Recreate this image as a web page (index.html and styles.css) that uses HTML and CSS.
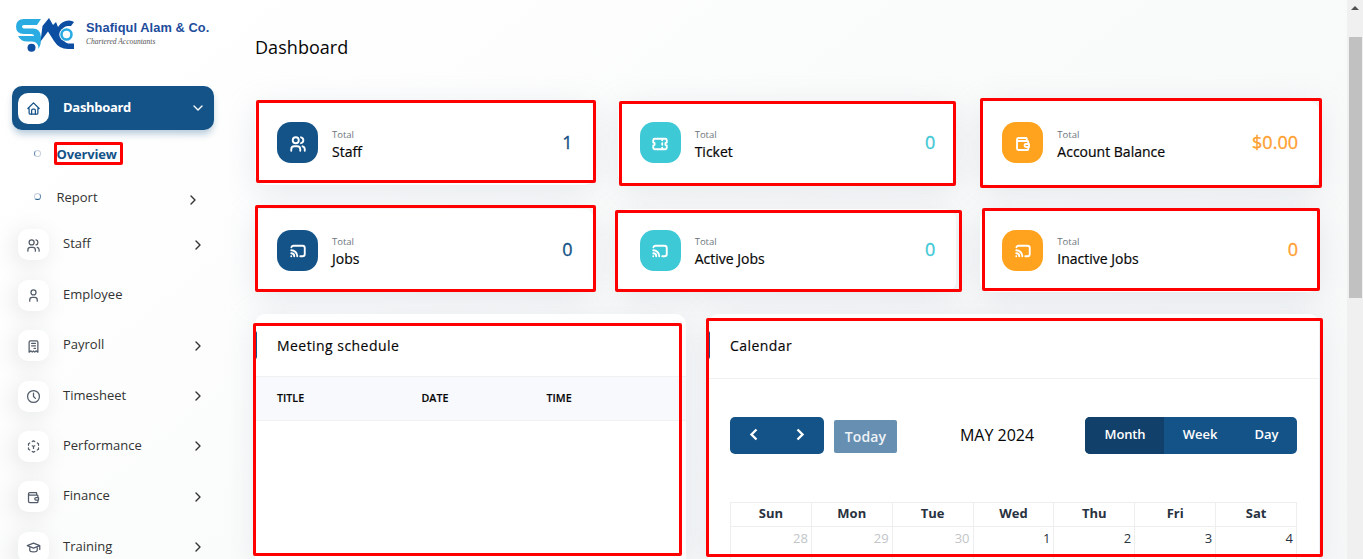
FILE: index.html
```
<!DOCTYPE html>
<html lang="en">
<head>
<meta charset="utf-8">
<title>Dashboard</title>
<link rel="stylesheet" href="styles.css">
</head>
<body>
<svg class="defs" width="0" height="0">
  <symbol id="home" viewBox="0 0 24 24"><path d="M5 12H3l9-9 9 9h-2v7a2 2 0 0 1-2 2H7a2 2 0 0 1-2-2z"/><path d="M9 21v-6a2 2 0 0 1 2-2h2a2 2 0 0 1 2 2v6"/></symbol>
  <symbol id="users" viewBox="0 0 24 24"><circle cx="9" cy="7" r="4"/><path d="M3 21v-2a4 4 0 0 1 4-4h4a4 4 0 0 1 4 4v2M16 3.100a4 4 0 0 1 0 7.800M21 21v-2a4 4 0 0 0-3-3.900"/></symbol>
  <symbol id="user" viewBox="0 0 24 24"><circle cx="12" cy="7" r="4"/><path d="M6 21v-2a4 4 0 0 1 4-4h4a4 4 0 0 1 4 4v2"/></symbol>
  <symbol id="receipt" viewBox="0 0 24 24"><path d="M5 21V5a2 2 0 0 1 2-2h10a2 2 0 0 1 2 2v16l-3-2-2 2-2-2-2 2-2-2zM9 7h6M9 11h6M13 15h2"/></symbol>
  <symbol id="clock" viewBox="0 0 24 24"><circle cx="12" cy="12" r="9.500"/><path d="M12 6.500V12l3 3"/></symbol>
  <symbol id="cube" viewBox="0 0 24 24"><path d="M6 17.600l-2-1.100V14M4 10V7.500l2-1.100M10 4.100L12 3l2 1.100M18 6.400l2 1.100V10M20 14v2.500l-2 1.120M14 19.900L12 21l-2-1.100M12 12l2-1.100M12 12v3M12 12l-2-1.100"/></symbol>
  <symbol id="wallet" viewBox="0 0 24 24"><path d="M17 8V5a1 1 0 0 0-1-1H6a2 2 0 0 0 0 4h12a1 1 0 0 1 1 1v3M19 16v3a1 1 0 0 1-1 1H6a2 2 0 0 1-2-2V6M20 12v4h-4a2 2 0 0 1 0-4z"/></symbol>
  <symbol id="school" viewBox="0 0 24 24"><path d="M22 9L12 5 2 9l10 4 10-4v6M6 10.600V16c0 1.700 2.700 3 6 3s6-1.300 6-3v-5.400"/></symbol>
  <symbol id="ticket" viewBox="0 0 24 24"><path d="M15 5v2M15 11v2M15 17v2M5 5h14a2 2 0 0 1 2 2v3a2 2 0 0 0 0 4v3a2 2 0 0 1-2 2H5a2 2 0 0 1-2-2v-3a2 2 0 0 0 0-4V7a2 2 0 0 1 2-2"/></symbol>
  <symbol id="cast" viewBox="0 0 24 24"><path d="M3 19h.01M7 19a4 4 0 0 0-4-4M11 19a8 8 0 0 0-8-8M15 19h3a3 3 0 0 0 3-3V8a3 3 0 0 0-3-3H6a3 3 0 0 0-2.800 2"/></symbol>
  <symbol id="right" viewBox="0 0 8 12"><path d="M2 2l4 4-4 4"/></symbol>
  <symbol id="left" viewBox="0 0 8 12"><path d="M6 2L2 6l4 4"/></symbol>
</svg>

<aside class="sidebar">
  <div class="brand">
    <svg class="logo" viewBox="0 0 60 36">
      <path fill="#2aace2" d="M26 2H9Q1 2 1 9.500 1 17 9 17H16Q19 17 19 19H3Q6 24.500 12 24.500H17Q23.500 24.500 23.500 32 26.500 27 26 20 25.500 11.500 18 11.500H9Q7 11.500 7 9.500 7 8 9 8H22Z"/>
      <circle cx="16.500" cy="30.800" r="4" fill="#0b4ea2"/>
      <path fill="#0b4ea2" d="M25.500 24.500L27.500 9 34 1 38 8 41 5 43 10Q47 3.500 54 3.500 57.500 3.500 59 5L56 9H53Q47 9 47 17 47 25 53 26.500H59V32H53Q44 32 39 24L33 14.500Z"/>
      <circle cx="51.500" cy="17.500" r="7.200" fill="#fff"/>
      <circle cx="51.500" cy="17.500" r="5" fill="none" stroke="#2aace2" stroke-width="2.600"/>
    </svg>
    <div class="brand-text">
      <div class="brand-name">Shafiqul Alam &amp; Co.</div>
      <div class="brand-sub">Chartered Accountants</div>
    </div>
  </div>
  <nav>
    <a class="item active"><span class="box"><svg><use href="#home"/></svg></span><span class="label">Dashboard</span><svg class="chev down"><use href="#right"/></svg></a>
    <a class="sub current"><i class="ring"></i><span class="label">Overview</span></a>
    <a class="sub"><i class="ring low"></i><span class="label">Report</span><svg class="chev"><use href="#right"/></svg></a>
    <a class="item"><span class="box"><svg><use href="#users"/></svg></span><span class="label">Staff</span><svg class="chev"><use href="#right"/></svg></a>
    <a class="item"><span class="box"><svg><use href="#user"/></svg></span><span class="label">Employee</span></a>
    <a class="item"><span class="box"><svg><use href="#receipt"/></svg></span><span class="label">Payroll</span><svg class="chev"><use href="#right"/></svg></a>
    <a class="item"><span class="box"><svg><use href="#clock"/></svg></span><span class="label">Timesheet</span><svg class="chev"><use href="#right"/></svg></a>
    <a class="item"><span class="box"><svg><use href="#cube"/></svg></span><span class="label">Performance</span><svg class="chev"><use href="#right"/></svg></a>
    <a class="item"><span class="box"><svg><use href="#wallet"/></svg></span><span class="label">Finance</span><svg class="chev"><use href="#right"/></svg></a>
    <a class="item"><span class="box"><svg><use href="#school"/></svg></span><span class="label">Training</span><svg class="chev"><use href="#right"/></svg></a>
  </nav>
</aside>

<main class="main">
  <h1>Dashboard</h1>
  <section class="stats">
    <div class="card blue"><span class="badge"><svg><use href="#users"/></svg></span><div class="info"><small>Total</small><b>Staff</b></div><span class="value">1</span></div>
    <div class="card teal"><span class="badge"><svg><use href="#ticket"/></svg></span><div class="info"><small>Total</small><b>Ticket</b></div><span class="value">0</span></div>
    <div class="card orange"><span class="badge"><svg><use href="#wallet"/></svg></span><div class="info"><small>Total</small><b>Account Balance</b></div><span class="value">$0.00</span></div>
    <div class="card blue"><span class="badge"><svg><use href="#cast"/></svg></span><div class="info"><small>Total</small><b>Jobs</b></div><span class="value">0</span></div>
    <div class="card teal"><span class="badge"><svg><use href="#cast"/></svg></span><div class="info"><small>Total</small><b>Active Jobs</b></div><span class="value">0</span></div>
    <div class="card orange"><span class="badge"><svg><use href="#cast"/></svg></span><div class="info"><small>Total</small><b>Inactive Jobs</b></div><span class="value">0</span></div>
  </section>
  <section class="panels">
    <div class="panel meeting">
      <h2>Meeting schedule</h2>
      <div class="thead"><span>TITLE</span><span>DATE</span><span>TIME</span></div>
    </div>
    <div class="panel calendar">
      <h2>Calendar</h2>
      <div class="toolbar">
        <div class="arrows"><svg><use href="#left"/></svg><svg><use href="#right"/></svg></div>
        <div class="today">Today</div>
        <div class="month">MAY 2024</div>
        <div class="views"><span class="on">Month</span><span>Week</span><span>Day</span></div>
      </div>
      <div class="grid">
        <b>Sun</b><b>Mon</b><b>Tue</b><b>Wed</b><b>Thu</b><b>Fri</b><b>Sat</b>
        <span class="off">28</span><span class="off">29</span><span class="off">30</span><span>1</span><span>2</span><span>3</span><span>4</span>
      </div>
    </div>
  </section>
</main>

<div class="scrollbar"><i class="arrow"></i><i class="thumb"></i></div>

<i class="mark m-overview"></i>
<i class="mark m-staff"></i>
<i class="mark m-ticket"></i>
<i class="mark m-balance"></i>
<i class="mark m-jobs"></i>
<i class="mark m-active"></i>
<i class="mark m-inactive"></i>
<i class="mark m-meeting"></i>
<i class="mark m-calendar"></i>
</body>
</html>
```

FILE: styles.css
```
* { box-sizing: border-box; }
html, body { height: 559px; overflow: hidden; }
body {
  margin: 0; display: flex; position: relative;
  font-family: "Open Sans", "Noto Sans", sans-serif; color: #060606;
  background: linear-gradient(141.500deg, #ffffff 3%, #fafcfb 45%, #f6f8f8 100%);
}
svg { fill: none; stroke: currentColor; stroke-width: 2; stroke-linecap: round; stroke-linejoin: round; display: block; }
.defs { position: absolute; }

/* sidebar */
.sidebar { width: 230px; height: 559px; flex: none; overflow: hidden; }
.brand { height: 86px; padding: 17px 0 0 15px; display: flex; gap: 11px; }
.logo { width: 60px; height: 36px; stroke: none; }
.brand-text { padding-top: 3px; }
.brand-name { font: bold 12.800px/16px "Liberation Sans", sans-serif; letter-spacing: .08px; color: #1d4c9c; white-space: nowrap; }
.brand-sub { font: italic 7.500px/12px "Liberation Serif", serif; color: #555; white-space: nowrap; }
nav { padding-left: 12px; }
.item, .sub { display: flex; align-items: center; width: 202px; color: #333; font-size: 13px; font-weight: 500; }
.item { height: 31px; margin-bottom: 19.400px; padding: 0 12px 0 6px; }
.item .label { margin: -3px auto 0 14px; }
.box { width: 31px; height: 31px; border-radius: 10px; background: #fff; display: grid; place-items: center; color: #525b69; box-shadow: -3px 4px 23px rgba(0,0,0,.1); }
.box svg { width: 15px; height: 15px; margin-top: 1px; }
.chev { width: 8px; height: 12px; stroke-width: 1.400; }
.down { transform: rotate(90deg); }
.item.active { height: 44px; margin-bottom: 2px; border-radius: 10px; background: #145388; color: #fff; font-weight: 700; letter-spacing: -.3px; box-shadow: 0 5px 7px -1px rgba(20,83,136,.3); }
.active .box { color: #145388; box-shadow: none; }
.sub { height: 43px; padding: 0 17px 0 22px; }
.sub:nth-child(3) { margin-bottom: 11.400px; }
.sub .label { margin: 0 auto 0 15.500px; }
.sub .chev { margin-top: 6px; }
.current { color: #145388; font-weight: 700; letter-spacing: -.15px; }
.ring { width: 7px; height: 7px; border: 1px solid #c7cedb; border-left-color: #5f86ab; border-radius: 50%; }
.ring.low { border-color: #c7cedb #5f86ab #145388 #c7cedb; }

/* content */
.main { flex: 1; height: 559px; overflow: hidden; padding: 0 28px 0 25px; }
h1 { margin: 0; height: 101px; padding-top: 35px; font-size: 18px; line-height: 25px; font-weight: 400; letter-spacing: .05px; }
.stats { display: grid; grid-template-columns: repeat(3, 1fr); gap: 24px; }
.card { height: 83.500px; padding: 0 21px 0 22px; border-radius: 10px; background: #fff; display: flex; align-items: center; box-shadow: 0 6px 30px rgba(182,186,203,.3); }
.badge { width: 41px; height: 41px; border-radius: 14px; display: grid; place-items: center; color: #fff; }
.badge svg { width: 18px; height: 18px; margin-top: 2px; stroke-width: 2.500; }
.info { margin: 2px auto 0 14px; display: flex; flex-direction: column; }
.info small { font-size: 9.500px; line-height: 15px; color: #6c757d; }
.info b { font-size: 14px; line-height: 19px; font-weight: 500; -webkit-text-stroke: .2px; }
.value { font-size: 18px; font-weight: 500; margin-top: -2px; -webkit-text-stroke: .35px; }
.blue .badge { background: #145388; } .blue .value { color: #145388; }
.teal .badge { background: #3ec9d6; } .teal .value { color: #3ec9d6; }
.orange .badge { background: #ffa21d; } .orange .value { color: #ff9f30; }
.panels { display: flex; gap: 22px; margin-top: 22px; }
.panel { height: 245px; border-radius: 10px 10px 0 0; background: #fff; box-shadow: 0 6px 30px rgba(182,186,203,.3); }
.meeting { width: 431px; }
.calendar { flex: 1; }
h2 { margin: 0; height: 62px; border-bottom: 1px solid #f1f1f1; font-size: 14px; line-height: 30px; font-weight: 500; letter-spacing: .45px; padding-top: 17px; -webkit-text-stroke: .15px; }
h2::before { content: ""; display: inline-block; vertical-align: top; width: 2px; height: 28px; margin-right: 20px; border-radius: 0 3px 3px 0; background: #145388; }
.calendar h2 { height: 65px; }
.thead { height: 45px; display: grid; grid-template-columns: 144.500px 125px 1fr; padding-left: 22px; background: #f8f9fd; border-bottom: 1px solid #f1f1f1; border-top: 1px solid #f1f1f1; font-size: 10.700px; line-height: 42px; font-weight: 600; -webkit-text-stroke: .15px; }
.meeting h2 { border: 0; }
.toolbar { display: flex; padding: 38px 22px 0; height: 123px; }
.arrows { width: 94px; height: 37px; border-radius: 5px; background: #145388; color: #fff; display: flex; justify-content: space-between; padding: 10px 19px; }
.arrows svg { width: 10px; height: 15px; stroke-width: 1.900; stroke-linecap: butt; stroke-linejoin: miter; }
.today { width: 63px; height: 33px; margin: 3px 0 0 10px; border-radius: 2px; background: #678fb1; color: #eef3f7; font-size: 14px; line-height: 34px; font-weight: 600; text-align: center; letter-spacing: .15px; }
.month { margin: 0 auto; padding-left: 12px; font-size: 16px; line-height: 37px; }
.views { display: flex; height: 37px; border-radius: 5px; overflow: hidden; background: #145388; color: #fff; font-size: 13px; line-height: 35px; font-weight: 600; text-align: center; }
.views span { width: 72px; } .views .on { width: 79px; padding-left: 1px; letter-spacing: -.15px; background: #11416a; } .views span:last-child { width: 61px; }
.grid { display: grid; grid-template-columns: repeat(7, 1fr); grid-template-rows: 24px 32px; margin: 0 22px; border: solid #eee; border-width: 1px 0 0 1px; font-size: 13px; }
.grid > * { border: solid #eee; border-width: 0 1px 1px 0; }
.grid b { line-height: 20px; text-align: center; color: #293240; }
.grid span { padding: 2px 3px 0; text-align: right; color: #293240; border-bottom: 0; }
.grid .off { color: #c2c5c9; }

.scrollbar { width: 16px; background: #f0f0f0; display: flex; flex-direction: column; align-items: center; }
.arrow { border: solid transparent; border-width: 0 4px 4px; border-bottom-color: #505050; margin: 6px 0 27px; }
.thumb { width: 13px; height: 261px; background: #c1c1c1; }

/* highlight frames lying over the page */
.mark { position: absolute; border: 3px solid #f00; border-radius: 2px; }
.m-overview { left: 54px; top: 142px; width: 69px; height: 23px; }
.m-staff { left: 256px; top: 100px; width: 340px; height: 83px; }
.m-ticket { left: 619px; top: 101px; width: 337px; height: 85px; }
.m-balance { left: 980px; top: 98px; width: 342px; height: 90px; }
.m-jobs { left: 255px; top: 205px; width: 341px; height: 87px; }
.m-active { left: 615px; top: 210px; width: 347px; height: 82px; }
.m-inactive { left: 982px; top: 208px; width: 338px; height: 83px; }
.m-meeting { left: 253px; top: 323px; width: 429px; height: 233px; }
.m-calendar { left: 706px; top: 318px; width: 617px; height: 239px; }
```
